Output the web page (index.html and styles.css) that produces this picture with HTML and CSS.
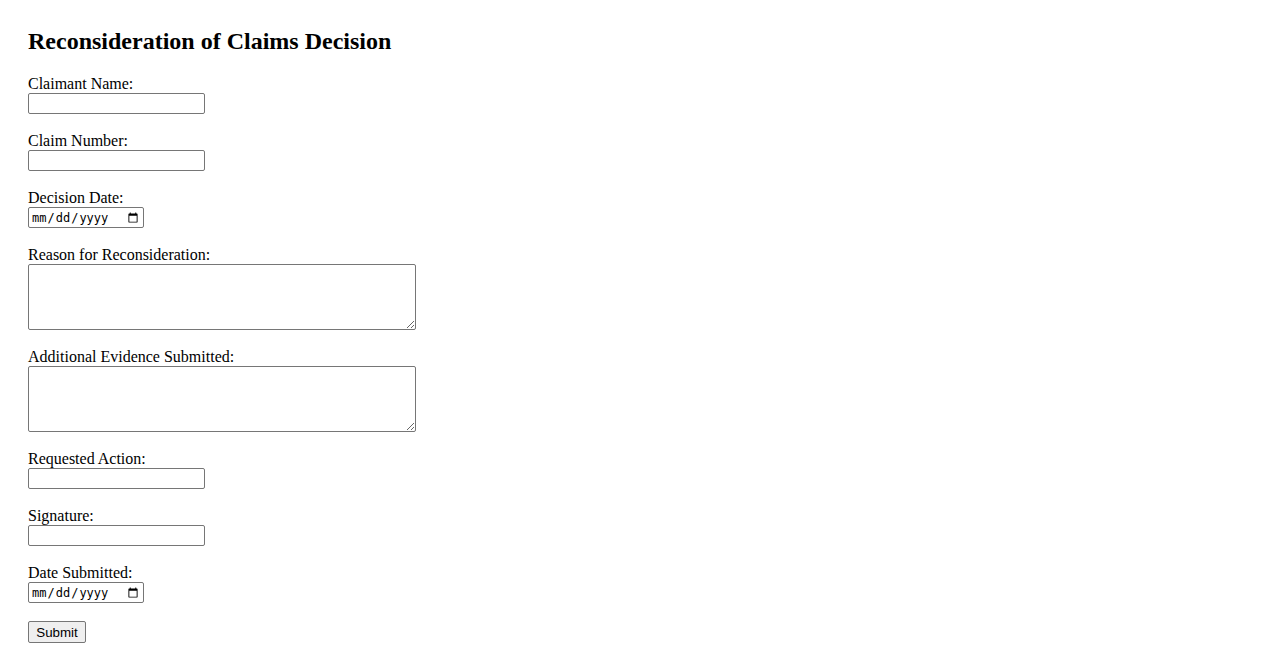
FILE: index.html
```html
<!DOCTYPE html>
<html>
<head>
<meta charset="utf-8">
<title>Reconsideration of Claims Decision</title>
<link rel="stylesheet" href="styles.css">
</head>
<body>
<h2 class="title">Reconsideration of Claims Decision</h2>
<form class="form">
  <div class="group"><label class="label">Claimant Name:</label><input class="field text" type="text"></div>
  <div class="group"><label class="label">Claim Number:</label><input class="field text" type="text"></div>
  <div class="group"><label class="label">Decision Date:</label><input class="field date" type="date"></div>
  <div class="group"><label class="label">Reason for Reconsideration:</label><textarea class="field area" rows="4" cols="50"></textarea></div>
  <div class="group"><label class="label">Additional Evidence Submitted:</label><textarea class="field area" rows="4" cols="50"></textarea></div>
  <div class="group"><label class="label">Requested Action:</label><input class="field text" type="text"></div>
  <div class="group"><label class="label">Signature:</label><input class="field text" type="text"></div>
  <div class="group"><label class="label">Date Submitted:</label><input class="field date" type="date"></div>
  <button class="submit" type="submit">Submit</button>
</form>
</body>
</html>
```
FILE: styles.css
```css
body {
  margin: 20px;
  padding: 8px;
  font-family: "Liberation Serif", "Times New Roman", serif;
  font-size: 16px;
  color: #000;
  background: #fff;
}
.title {
  margin: 0 0 20px;
  font-size: 24px;
}
.group {
  margin-bottom: 18px;
}
.label {
  display: block;
  line-height: 18px;
}
.field {
  display: block;
  box-sizing: border-box;
  margin: 0;
  border: 1px solid #767676;
  border-radius: 2px;
  background: #fff;
}
.text {
  width: 177px;
  height: 21px;
}
.date {
  width: 116px;
  height: 21px;
  padding: 1px 2px;
  font-family: "DejaVu Sans Mono", "Liberation Mono", monospace;
  font-size: 12px;
}
.area {
  width: 388px;
  height: 66px;
}
.submit {
  box-sizing: border-box;
  width: 58px;
  height: 22px;
  margin: 0;
  font-family: "Liberation Sans", Arial, sans-serif;
  font-size: 13.33px;
  border: 1px solid #767676;
  border-radius: 2px;
  background: #efefef;
}
```
